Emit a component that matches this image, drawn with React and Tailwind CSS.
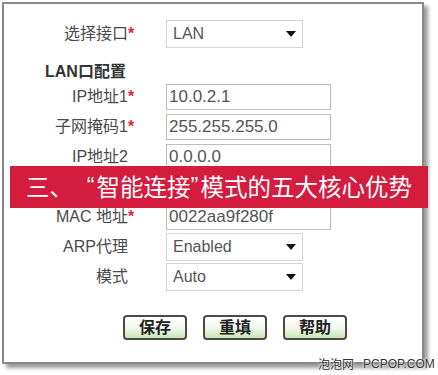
import React from "react";

const rows = [
  { label: "IP地址1", star: true, value: "10.0.2.1" },
  { label: "子网掩码1", star: true, value: "255.255.255.0" },
  { label: "IP地址2", star: false, value: "0.0.0.0" },
  { hidden: true },
  { label: "MAC 地址", star: true, value: "0022aa9f280f" },
];

function Arrow() {
  return (
    <svg width="10" height="6" viewBox="0 0 10 6" className="shrink-0">
      <path d="M0 0 L10 0 L5 6 Z" fill="#111" />
    </svg>
  );
}

function Label({ text, star }) {
  return (
    <div className="flex items-center shrink-0">
      <span className="w-[124px] text-right text-[16px] text-[#4a4a4a]">{text}</span>
      <span className="w-[10px] text-[16px] text-[#e0223a] font-bold leading-none">{star ? "*" : ""}</span>
    </div>
  );
}

function Select({ value }) {
  return (
    <div className="ml-[28px] w-[137px] h-[28px] border border-[#d4d4d4] bg-white flex items-center justify-between pl-[6px] pr-[6px]">
      <span className="text-[16px] text-[#555]">{value}</span>
      <Arrow />
    </div>
  );
}

function Input({ value }) {
  return (
    <div className="ml-[28px] w-[165px] h-[26px] border border-[#bdbdbd] bg-white flex items-center pl-[2px]">
      <span className="text-[17px] text-[#555]">{value}</span>
    </div>
  );
}

function Btn({ children }) {
  return (
    <div className="w-[64px] h-[25px] rounded-[4px] border-2 border-[#4a4a4a] bg-gradient-to-b from-white via-[#f4f8f0] to-[#c9e6b4] flex items-center justify-center">
      <span className="text-[16px] font-bold text-[#222] leading-none">{children}</span>
    </div>
  );
}

export default function App() {
  return (
    <div className="w-[438px] h-[375px] bg-white relative overflow-hidden font-['Liberation_Sans','Noto_Sans_CJK_SC',sans-serif]">
      <div className="ml-[2px] mt-[2px] w-[422px] h-[362px] border-2 border-[#888] bg-white shadow-[4px_4px_4px_rgba(0,0,0,0.4)] flex flex-col">
        <div className="h-[15px]" />
        <div className="h-[30px] flex items-center">
          <Label text="选择接口" star />
          <Select value="LAN" />
        </div>
        <div className="h-[13px]" />
        <div className="h-[20px] flex items-center pl-[41px]">
          <span className="text-[16px] font-bold text-[#333]">LAN口配置</span>
        </div>
        {rows.map((r, i) =>
          r.hidden ? (
            <div key={i} className="h-[30px]" />
          ) : (
            <div key={i} className="h-[30px] flex items-center">
              <Label text={r.label} star={r.star} />
              <Input value={r.value} />
            </div>
          )
        )}
        <div className="h-[30px] flex items-center">
          <Label text="ARP代理" />
          <Select value="Enabled" />
        </div>
        <div className="h-[30px] flex items-center">
          <Label text="模式" />
          <Select value="Auto" />
        </div>
        <div className="h-[23px]" />
        <div className="flex gap-[16px] pl-[119px]">
          <Btn>保存</Btn>
          <Btn>重填</Btn>
          <Btn>帮助</Btn>
        </div>
      </div>

      <div className="absolute left-[10px] top-[166px] w-[418px] h-[42px] bg-[#d41c3f] flex items-center pl-[16px] text-[23.5px] text-white leading-none whitespace-nowrap font-['Noto_Sans_CJK_SC',sans-serif]">
        <span>三、</span>
        <span className="w-[23.5px] text-right pr-[2px] font-['Liberation_Sans',sans-serif]">“</span>
        <span>智能连接</span>
        <span className="w-[10px] font-['Liberation_Sans',sans-serif]">”</span>
        <span>模式的五大核心优势</span>
      </div>

      <div className="absolute left-[318px] top-[358px] flex items-center text-[#333] [text-shadow:0_0_2px_#fff,0_0_2px_#fff] leading-none whitespace-nowrap">
        <span className="text-[12px] font-['Noto_Sans_CJK_SC',sans-serif]">泡泡网</span>
        <span className="ml-[9px] text-[12px] font-['Liberation_Sans',sans-serif]">PCPOP.COM</span>
      </div>
    </div>
  );
}
